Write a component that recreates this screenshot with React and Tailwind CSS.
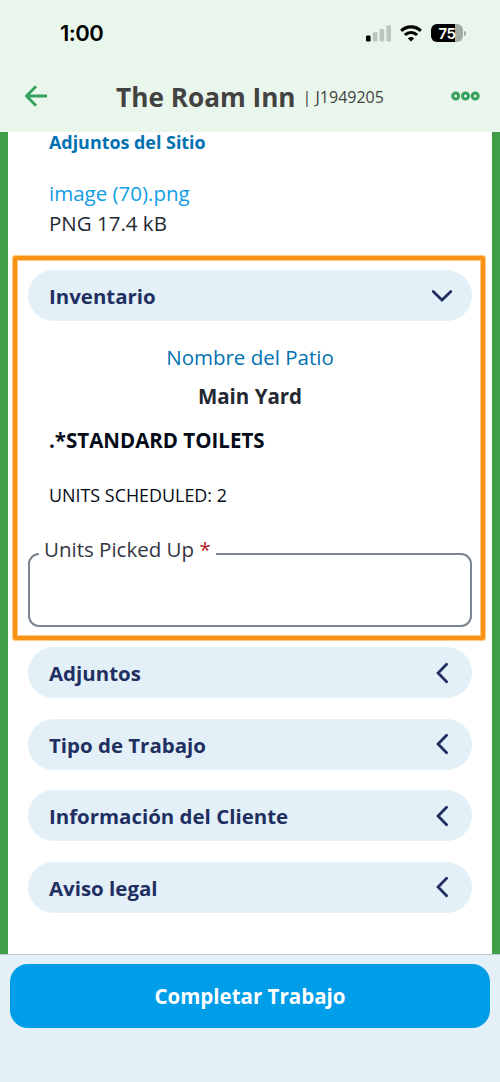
import React from "react";

const sections = [
  "Adjuntos",
  "Tipo de Trabajo",
  "Información del Cliente",
  "Aviso legal",
];

const StatusBar = () => (
  <div className="flex h-[66px] items-center justify-between pl-[60px] pr-[34px]">
    <span className="font-['Inter',sans-serif] text-[22px] leading-none font-semibold tracking-[-0.5px] text-black">
      1:00
    </span>

    <div className="flex items-center">
      {/* Signal */}
      <svg width="26" height="18" viewBox="0 0 26 18" className="mr-[8px]">
        <rect x="0" y="11.5" width="4.6" height="6" rx="1.2" fill="#000" />
        <rect x="6.8" y="8.2" width="4.6" height="9.3" rx="1.2" fill="#b9c7bd" />
        <rect x="13.6" y="5" width="4.6" height="12.5" rx="1.2" fill="#b9c7bd" />
        <rect x="20.4" y="1.3" width="4.6" height="16.2" rx="1.2" fill="#b9c7bd" />
      </svg>

      {/* Wifi */}
      <svg width="22" height="17" viewBox="0 0 22 17" className="mr-[9px]">
        <g fill="none" stroke="#000" strokeWidth="3.1">
          <path d="M1.2 5.9a14 14 0 0 1 19.6 0" />
          <path d="M4.9 10a8.7 8.7 0 0 1 12.2 0" />
        </g>
        <path d="M11 16.6l-3.1-3.1a4.6 4.6 0 0 1 6.2 0z" fill="#000" />
      </svg>

      {/* Battery */}
      <div className="flex items-center">
        <div className="flex h-[18px] w-8 items-center justify-center rounded-[6px] bg-linear-to-r from-black from-75% to-[#a3ada6] to-75%">
          <span className="font-['Inter',sans-serif] text-[15px] leading-none font-semibold tracking-[-0.5px] text-white">
            75
          </span>
        </div>
        <div className="ml-px h-[5px] w-[2px] rounded-r-full bg-[#a3ada6]" />
      </div>
    </div>
  </div>
);

const TitleBar = () => (
  <div className="flex h-[60px] items-center pr-[20px] pl-[24px]">
    <button aria-label="Volver">
      <svg width="24" height="22" viewBox="0 0 24 22" fill="none" stroke="#34a15c" strokeWidth="2.8">
        <path d="M12 1.2L2.5 11l9.5 9.8M2.5 11H23" />
      </svg>
    </button>

    <h1 className="mt-[3px] ml-[68px] whitespace-nowrap text-[26.2px] font-bold text-[#424242]">
      The Roam Inn
    </h1>
    <span className="mt-px ml-[7px] whitespace-nowrap text-[16px] text-[#424242]">
      | J1949205
    </span>

    <button aria-label="Opciones" className="ml-auto">
      <svg width="29" height="10" viewBox="0 0 29 10" fill="none" stroke="#34a15c" strokeWidth="3">
        <circle cx="4.7" cy="5" r="3" />
        <circle cx="14.5" cy="5" r="3" />
        <circle cx="24.2" cy="5" r="3" />
      </svg>
    </button>
  </div>
);

const SectionPill = ({ title, open }) => (
  <button className="flex h-[51px] w-full items-center justify-between rounded-full bg-[#e3f0f8] pr-[19px] pl-[21px] text-[20.45px] font-bold text-[#1f2f62]">
    <span className="whitespace-nowrap pt-[2px]">{title}</span>
    <svg
      width="22"
      height="22"
      viewBox="0 0 22 22"
      fill="none"
      stroke="#1f2f62"
      strokeWidth="2.8"
      strokeLinecap="round"
    >
      {open ? (
        <path d="M2.2 6.5L11 15l8.8-8.5" />
      ) : (
        <path d="M15.6 2.2L7.1 11l8.5 8.8" />
      )}
    </svg>
  </button>
);

const App = () => {
  return (
    <div className="flex h-[1082px] w-[500px] flex-col overflow-hidden bg-white font-['Open_Sans',sans-serif]">
      <header className="h-[132px] shrink-0 bg-[#e9f6ec]">
        <StatusBar />
        <TitleBar />
      </header>

      <main className="h-[822px] shrink-0 border-x-8 border-[#409f46]">
        {/* Site attachments */}
        <div className="h-[124px] pl-[41px]">
          <h2 className="h-5 text-[17.9px] leading-5 font-bold text-[#0072b1]">
            Adjuntos del Sitio
          </h2>
          <a className="mt-[26px] block h-[30px] text-[20.5px] leading-[30px] text-[#109de5]">
            image (70).png
          </a>
          <p className="text-[20.5px] leading-[30px] text-[#242833]">PNG 17.4 kB</p>
        </div>

        {/* Inventory */}
        <section className="ml-[5px] h-[384px] w-[472px] rounded-[2px] border-4 border-[#fa9213] pr-[9px] pl-[11px] pt-[10px] shadow-[0_0_0_1px_#fdca8b,inset_0_0_0_1px_#fdca8b]">
          <SectionPill title="Inventario" open />
          <p className="mt-[21px] text-center text-[20.5px] leading-[30px] text-[#0072b1]">
            Nombre del Patio
          </p>
          <p className="mt-[9px] text-center text-[20.5px] leading-[30px] font-bold text-[#242833]">
            Main Yard
          </p>
          <p className="mt-[14px] pl-[21px] text-[20.5px] leading-[30px] font-bold text-[#050a18]">
            .*STANDARD TOILETS
          </p>
          <p className="mt-[25px] pl-[21px] text-[17.9px] leading-[30px] text-[#050a18]">
            UNITS SCHEDULED: 2
          </p>
          <div className="relative mt-[43px] h-[74px] w-[444px] rounded-[11px] border-2 border-[#7b8490]">
            <label className="absolute -top-[21px] left-[9px] h-[30px] w-[177px] whitespace-nowrap bg-white pl-[5px] text-[20.5px] leading-[30px] text-[#33363f]">
              Units Picked Up <span className="text-[#b3171c]">*</span>
            </label>
          </div>
        </section>

        <div className="mt-[7px] flex h-[266px] flex-col justify-between px-5">
          {sections.map((title) => (
            <SectionPill key={title} title={title} />
          ))}
        </div>
      </main>

      <footer className="h-[128px] shrink-0 border-t border-[#bfc8d2] bg-[#e3f0f8] px-[10px] pt-[9px]">
        <button className="h-16 w-full rounded-[18px] bg-[#009de8] pt-px text-[20.5px] font-bold text-white">
          Completar Trabajo
        </button>
      </footer>
    </div>
  );
};

export default App;
